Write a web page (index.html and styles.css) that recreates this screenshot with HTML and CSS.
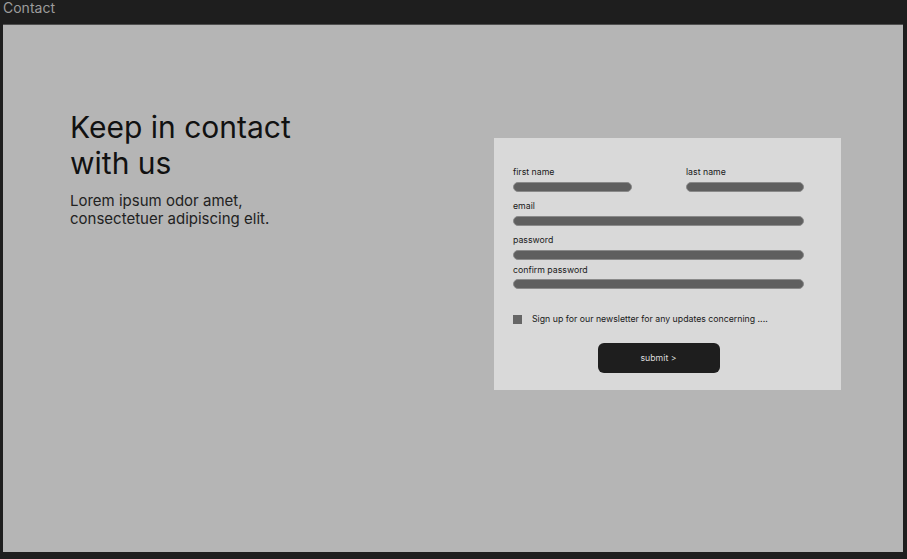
FILE: index.html
```html
<!DOCTYPE html>
<html lang="en">
<head>
<meta charset="utf-8">
<title>Contact</title>
<link rel="stylesheet" href="styles.css">
</head>
<body>
<div class="frame-label">Contact</div>
<main class="frame">
  <section class="intro">
    <h1 class="title">Keep in contact<br>with us</h1>
    <p class="lead">Lorem ipsum odor amet,<br>consectetuer adipiscing elit.</p>
  </section>
  <form class="card">
    <div class="row-two">
      <div class="field">
        <label class="label">first name</label>
        <div class="bar"></div>
      </div>
      <div class="field">
        <label class="label">last name</label>
        <div class="bar"></div>
      </div>
    </div>
    <div class="field">
      <label class="label">email</label>
      <div class="bar"></div>
    </div>
    <div class="field">
      <label class="label">password</label>
      <div class="bar"></div>
    </div>
    <div class="field field-tight">
      <label class="label">confirm password</label>
      <div class="bar"></div>
    </div>
    <div class="check-row">
      <span class="checkbox"></span>
      <span class="check-text">Sign up for our newsletter for any updates concerning ....</span>
    </div>
    <div class="actions">
      <button type="button" class="submit">submit &gt;</button>
    </div>
  </form>
</main>
</body>
</html>
```

FILE: styles.css
```css
* { box-sizing: border-box; }
html, body { margin: 0; padding: 0; }
body {
  background: #1e1e1e;
  font-family: Inter, "Noto Sans", sans-serif;
  width: 907px;
  height: 559px;
  overflow: hidden;
}
.frame-label {
  height: 24px;
  padding-left: 3px;
  font-size: 14px;
  line-height: 16px;
  color: #9c9c9c;
}
.frame {
  margin-left: 3px;
  width: 900px;
  height: 528px;
  background: #b5b5b5;
  border-top: 1px solid #4f4f4f;
  display: grid;
  grid-template-columns: 424px 347px;
  align-items: start;
  padding: 84px 0 0 67px;
}
.title {
  margin: 0;
  font-size: 30px;
  line-height: 36px;
  font-weight: 400;
  color: #111;
}
.lead {
  margin: 11px 0 0;
  font-size: 15px;
  line-height: 18px;
  color: #222;
}
.card {
  margin: 29px 0 0;
  height: 252px;
  background: #d9d9d9;
  padding: 28px 37px 0 19px;
  display: flex;
  flex-direction: column;
}
.row-two {
  display: flex;
  justify-content: space-between;
}
.row-two .field { width: 119px; }
.row-two .field + .field { width: 118px; }
.field { margin-bottom: 8px; }
.field-tight { margin-top: -4px; }
.field-tight .bar { margin-top: 3px; }
.label {
  display: block;
  margin-top: 1px;
  font-size: 8.75px;
  line-height: 11px;
  color: #1a1a1a;
}
.bar {
  margin-top: 4px;
  height: 10px;
  border-radius: 5px;
  background: #5f5f5f;
  border: 1px solid #8a8a8a;
}
.check-row {
  display: flex;
  align-items: center;
  margin-top: 17px;
  height: 10px;
}
.checkbox {
  width: 9px;
  height: 9px;
  background: #666;
}
.check-text {
  margin-left: 10px;
  font-size: 8.75px;
  color: #1a1a1a;
  white-space: nowrap;
}
.actions {
  display: flex;
  justify-content: center;
  margin-top: 19px;
}
.submit {
  width: 122px;
  height: 30px;
  border: 0;
  border-radius: 6px;
  background: #1e1e1e;
  color: #dcdcdc;
  font-family: Inter, "Noto Sans", sans-serif;
  font-size: 8.75px;
  cursor: pointer;
}
```
